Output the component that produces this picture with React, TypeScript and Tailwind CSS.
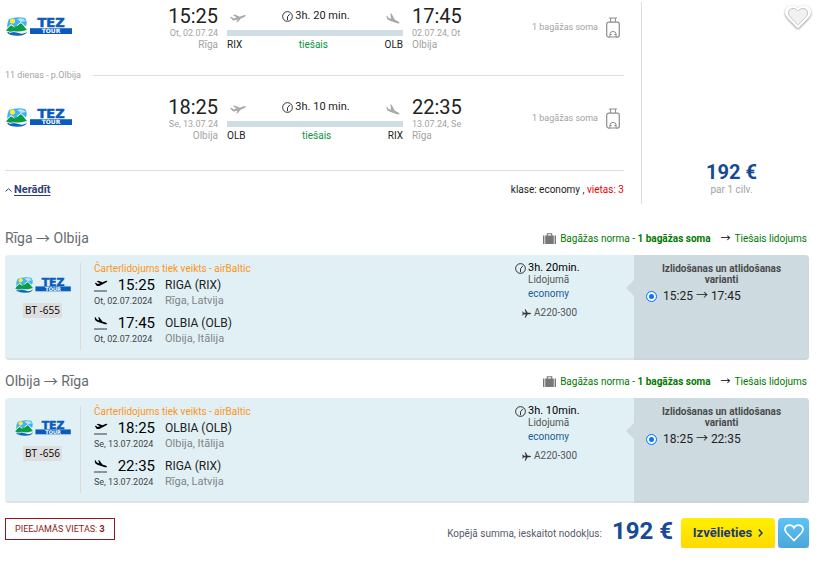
import React from "react";

type Leg = {
  from: string;
  to: string;
  fromCode: string;
  toCode: string;
  fromTitle: string;
  toTitle: string;
  fromPlace: string;
  toPlace: string;
  depart: string;
  arrive: string;
  departDate: string;
  arriveDate: string;
  longDate: string;
  duration: string;
  shortDuration: string;
  flight: string;
};

const legs: Leg[] = [
  {
    from: "Rīga",
    to: "Olbija",
    fromCode: "RIX",
    toCode: "OLB",
    fromTitle: "RIGA (RIX)",
    toTitle: "OLBIA (OLB)",
    fromPlace: "Rīga, Latvija",
    toPlace: "Olbija, Itālija",
    depart: "15:25",
    arrive: "17:45",
    departDate: "Ot, 02.07.24",
    arriveDate: "02.07.24, Ot",
    longDate: "Ot, 02.07.2024",
    duration: "3h. 20 min.",
    shortDuration: "3h. 20min.",
    flight: "BT -655",
  },
  {
    from: "Olbija",
    to: "Rīga",
    fromCode: "OLB",
    toCode: "RIX",
    fromTitle: "OLBIA (OLB)",
    toTitle: "RIGA (RIX)",
    fromPlace: "Olbija, Itālija",
    toPlace: "Rīga, Latvija",
    depart: "18:25",
    arrive: "22:35",
    departDate: "Se, 13.07.24",
    arriveDate: "13.07.24, Se",
    longDate: "Se, 13.07.2024",
    duration: "3h. 10 min.",
    shortDuration: "3h. 10min.",
    flight: "BT -656",
  },
];

function TezLogo({ className }: { className: string }) {
  return (
    <svg viewBox="0 0 66 19" className={`shrink-0 ${className}`} role="img" aria-label="TEZ TOUR">
      <path d="M3 2 Q11 -1 19 1 Q22 5 20 9 L2 12 Q0 8 3 2Z" fill="#3fb4ee" />
      <path d="M11 2 Q17 0 20 4 L15 5Z" fill="#b9e4fa" />
      <circle cx="6.5" cy="4" r="2.6" fill="#ffe83b" />
      <path d="M0 14 Q3 8 7 9 Q9 9 10 10 Q14 5 16 7 L21 13 Q12 16 0 14Z" fill="#0c9d43" />
      <path d="M1.5 11 L5 7.6 L8.5 10 M11 8.5 L15 5.4 L19 9.5" stroke="#fff" strokeWidth="1" fill="none" />
      <path d="M1 15.5 Q7 13 12 15.5 T21 14.5 Q20 18.6 12 18.8 Q4 19 1 15.5Z" fill="#1068ba" />
      <path d="M3 15.6 Q8 13.6 12 15.4 T20 15" stroke="#fff" strokeWidth=".8" fill="none" />
      <rect x="24" y="11.2" width="42" height="5.8" fill="#0a5bbd" />
      <g fontFamily="DejaVu Sans, sans-serif" fontWeight="700" textAnchor="middle">
        <text x="45" y="10.2" fontSize="13" fill="#0a5bbd" stroke="#0a5bbd" strokeWidth=".6">TEZ</text>
        <text x="45" y="16.3" fontSize="6" fill="#fff">TOUR</text>
      </g>
    </svg>
  );
}

function Arrow() {
  return <span className="font-['Noto_Sans_CJK_JP',sans-serif] leading-none">→</span>;
}

function Clock() {
  return (
    <svg viewBox="0 0 12 12" className="size-[11px] shrink-0" fill="none" stroke="#222">
      <circle cx="6" cy="6" r="5.3" strokeWidth="1" />
      <path d="M6 10V6.2L8.6 3.2" strokeWidth="1" />
    </svg>
  );
}

function PlaneUp({ className }: { className: string }) {
  return (
    <svg viewBox="0 0 16 9" className={className} fill="currentColor">
      <path d="M0 3 L1.4 2.7 L3.8 4.4 L6.6 3.6 L2.9 1 L4.8 .6 L9.7 2.8 L13 1.5 Q15.5 .7 15.9 1.5 Q15.6 2.7 13.5 3.5 L10.9 4.5 L7.6 8.2 L6.2 8.6 L7.7 5.6 L4.2 6.4 L2.8 6.3Z" />
    </svg>
  );
}

function PlaneDown({ className }: { className: string }) {
  return (
    <svg viewBox="0 0 14 11" className={className} fill="currentColor">
      <path d="M.2 2.8 L1.3 3 L2.6 4.9 L5 5.8 L4.4 .3 L5.7 .8 L8.6 6.6 L11.8 8.2 Q13.8 9.4 13.4 10.2 Q12.3 10.7 10.2 9.9 L3.4 7.6 L1.2 6.3Z" />
    </svg>
  );
}

function Takeoff() {
  return (
    <svg viewBox="0 0 14 13" className="h-[13px] w-[14px]" fill="#000">
      <path d="M.8 3.9 L2 3.7 L3.5 5 L6.1 4.2 L2.6 2.4 L4.2 1.8 L8.6 3.3 L11.4 2.1 Q13 1.4 13.4 1.9 Q13.2 3 11.5 3.8 L5.3 6.9 L2.8 7.1Z" />
      <path d="M0 12h13" stroke="#666c70" strokeWidth="1.4" />
    </svg>
  );
}

function Landing() {
  return (
    <svg viewBox="0 0 14 14" className="h-[14px] w-[14px]" fill="#000">
      <path d="M.7 1 L1.8 1.5 L2.6 3.3 L5.2 4.4 L4.2 .9 L5.5 1.4 L8.4 5.4 L11.5 6.5 Q13.4 7.3 13 8 Q12.2 8.7 10.3 8 L3.3 5.8 L1 4.1Z" />
      <path d="M0 13h13" stroke="#666c70" strokeWidth="1.4" />
    </svg>
  );
}

function Luggage() {
  return (
    <svg viewBox="0 0 14 22" className="h-[22px] w-[14px] shrink-0" fill="none" stroke="#8c8c8c">
      <path d="M3 1h8M4.6 1v4M9.4 1v4M3 21v-1M11 21v-1" />
      <rect x=".7" y="5.2" width="12.6" height="14.8" rx="2" strokeWidth="1.2" />
      <path d="M4 20v-3.2q0-2.3 3-2.3t3 2.3V20M3.8 17.5h1.8M8.4 17.5h1.8" />
    </svg>
  );
}

function Suitcase() {
  return (
    <svg viewBox="0 0 13 11" className="h-[11px] w-[13px]" fill="#777">
      <path d="M0 2.5h1.4V11H0zM11.6 2.5H13V11h-1.4zM2.2 2.5h8.6V11H2.2z" />
      <path d="M4.3 3V.7h4.4V3" fill="none" stroke="#777" strokeWidth="1.1" />
    </svg>
  );
}

const heart = "M12 21 L3.2 12 C-.8 7.6 1.8 2.5 6.6 2.5 C9 2.5 11 3.8 12 5.8 C13 3.8 15 2.5 17.4 2.5 C22.2 2.5 24.8 7.6 20.8 12 Z";

function Summary({ leg }: { leg: Leg }) {
  return (
    <div className="flex items-start">
      <TezLogo className="mt-[15px] ml-px h-[19px] w-[66px]" />
      <div className="ml-auto w-20 text-right leading-3 text-[#a3a3a3]">
        <div className="h-[25px] text-xl leading-7 text-[#222]">{leg.depart}</div>
        <div className="text-[9px]">{leg.departDate}</div>
        <div>{leg.from}</div>
      </div>
      <div className="mx-[9px] w-[176px] leading-3 text-[#222]">
        <div className="flex h-7 items-center justify-between px-[3px]">
          <PlaneUp className="mt-1 h-[9px] w-4 text-[#a9a9a9]" />
          <div className="flex items-center text-[11px]">
            <Clock />
            <span className="ml-0.5">{leg.duration}</span>
          </div>
          <PlaneDown className="mt-1 h-[11px] w-[14px] text-[#a9a9a9]" />
        </div>
        <div className="mb-[3px] h-1.5 bg-[#cfdee5]" />
        <div className="flex justify-between">
          <span>{leg.fromCode}</span>
          <span className="text-[#0a9444]">tiešais</span>
          <span>{leg.toCode}</span>
        </div>
      </div>
      <div className="w-20 leading-3 text-[#a3a3a3]">
        <div className="h-[25px] text-xl leading-7 text-[#222]">{leg.arrive}</div>
        <div className="text-[9px]">{leg.arriveDate}</div>
        <div>{leg.to}</div>
      </div>
      <div className="mt-[15px] mr-1 ml-9 flex w-[92px] shrink-0 items-center justify-end gap-2 text-[9px] whitespace-nowrap text-[#a3a3a3]">
        1 bagāžas soma
        <Luggage />
      </div>
    </div>
  );
}

function Stop({ icon, time, date, title, place }: { icon: React.ReactNode; time: string; date: string; title: string; place: string }) {
  return (
    <div className="grid grid-cols-[61px_auto] gap-x-2.5 whitespace-nowrap">
      <div className="flex h-[18px] items-center justify-between">
        {icon}
        <span className="text-[15px] leading-[18px] text-black">{time}</span>
      </div>
      <div className="text-xs leading-[18px] text-[#222]">{title}</div>
      <div className="text-[9px] leading-[14px] text-[#444]">{date}</div>
      <div className="text-[11px] leading-[14px] text-[#808488]">{place}</div>
    </div>
  );
}

function Details({ leg }: { leg: Leg }) {
  return (
    <section className="mb-2">
      <div className="flex h-[26px] items-center justify-between">
        <h2 className="text-sm leading-5 text-[#666b70]">
          {leg.from} <Arrow /> {leg.to}
        </h2>
        <div className="mr-0.5 flex items-center text-[#007a00]">
          <Suitcase />
          <span className="ml-1">
            Bagāžas norma - <b className="font-bold">1 bagāžas soma</b>
          </span>
          <span className="mr-1 ml-2.5 text-black">
            <Arrow />
          </span>
          <span>Tiešais lidojums</span>
        </div>
      </div>
      <div className="mt-1 flex h-[105px] rounded border-b-2 border-[#dce3e6] bg-[#e1f0f5]">
        <div className="my-2 flex w-[76px] shrink-0 flex-col items-center border-r border-[#d9dcdd]">
          <TezLogo className="mt-3.5 h-4 w-[58px]" />
          <div className="mt-2.5 bg-[#dedede] px-0.5 font-['Open_Sans'] leading-[15px] text-black">{leg.flight}</div>
        </div>
        <div className="ml-[13px] pt-2">
          <div className="leading-3 text-[#ff9416]">Čarterlidojums tiek veikts - airBaltic</div>
          <div className="flex flex-col gap-1.5 pt-px">
            <Stop icon={<Takeoff />} time={leg.depart} date={leg.longDate} title={leg.fromTitle} place={leg.fromPlace} />
            <Stop icon={<Landing />} time={leg.arrive} date={leg.longDate} title={leg.toTitle} place={leg.toPlace} />
          </div>
        </div>
        <div className="ml-auto w-[119px] pt-[7px] leading-3 text-[#555]">
          <div className="flex items-center text-[11px] text-black">
            <Clock />
            <span className="ml-0.5">{leg.shortDuration}</span>
          </div>
          <div className="ml-[13px]">Lidojumā</div>
          <div className="mt-0.5 ml-[13px] text-[#1a5c96]">economy</div>
          <div className="mt-[7px] ml-[7px] flex items-center gap-[3px]">
            <svg viewBox="0 0 10 10" className="size-[9px]" fill="#333">
              <path d="M10 5q0-.8-1.5-.8H6.3L3.9.2H3l1.2 4H2L1 2.8H.3L.8 5 .3 7.2H1l1-1.4h2.2L3 9.8h.9l2.4-4h2.2Q10 5.8 10 5Z" />
            </svg>
            A220-300
          </div>
        </div>
        <div className="relative -mb-0.5 w-[175px] shrink-0 rounded-r border-b-2 border-[#c9d5da] bg-[#cddae0] pt-2">
          <svg viewBox="0 0 8 16" className="absolute top-[25px] -left-2 h-4 w-2" fill="#cddae0">
            <path d="M8 0v16L0 8Z" />
          </svg>
          <div className="px-6 text-center leading-[11px] font-bold text-[#4a4a4a]">Izlidošanas un atlidošanas varianti</div>
          <label className="mt-1 ml-[13px] flex items-center gap-[7px] text-xs leading-[15px] text-[#222]">
            <input type="radio" name={leg.flight} defaultChecked className="size-[9px] appearance-none rounded-full border-2 border-white bg-[#0075ff] outline-1 outline-[#0075ff]" />
            <span>
              {leg.depart} <Arrow /> {leg.arrive}
            </span>
          </label>
        </div>
      </div>
    </section>
  );
}

export default function App() {
  return (
    <main className="bg-white pl-[5px] font-[Roboto,'Liberation_Sans',sans-serif] text-[10px]">
      <section className="flex pt-0.5">
        <div className="mr-[17px] flex-1">
          <Summary leg={legs[0]} />
          <div className="mt-[18px] mb-3 flex items-center gap-3 text-[9px] leading-3 text-[#a3a3a3]">
            11 dienas - p.Olbija
            <div className="h-px flex-1 bg-[#dedede]" />
          </div>
          <Summary leg={legs[1]} />
          <div className="mt-7 flex items-center justify-between border-t border-[#dedede] pt-[11px]">
            <a href="#" className="flex items-center gap-0.5 text-[11px] leading-3 font-bold text-[#2e3f80]">
              <svg viewBox="0 0 7 4" className="h-1 w-[7px]" fill="none" stroke="currentColor">
                <path d="M.5 3.5 3.5 .7l3 2.8" />
              </svg>
              <span className="underline underline-offset-2">Nerādīt</span>
            </a>
            <div className="text-[#222]">
              klase: economy , <span className="text-[#e80000]">vietas: 3</span>
            </div>
          </div>
        </div>
        <div className="relative flex w-[180px] shrink-0 flex-col items-center border-l border-[#dedede] pt-[158px] pb-2">
          <button type="button" aria-label="Pievienot izlasei" className="absolute top-0.5 right-2.5">
            <svg viewBox="0 0 24 24" className="size-[26px] drop-shadow-[0_1px_1px_rgba(0,0,0,0.45)]" fill="#f1f1f1" stroke="#fff" strokeWidth="2.4">
              <path d={heart} />
              <path d={heart} stroke="#aaa" strokeWidth=".7" fill="none" transform="translate(2.2 2.1) scale(.82)" />
            </svg>
          </button>
          <div className="text-xl leading-6 font-bold text-[#174a94]">192 €</div>
          <div className="leading-3 text-[#a3a3a3]">par 1 cilv.</div>
        </div>
      </section>

      <div className="mt-[21px] mr-3">
        {legs.map((leg) => (
          <Details key={leg.flight} leg={leg} />
        ))}
        <div className="mt-[15px] flex h-[30px] items-center">
          <div className="mb-2 border border-[#96161c] px-[9px] text-[9px] leading-5 whitespace-nowrap text-[#8c1a20]">
            PIEEJAMĀS VIETAS: <b>3</b>
          </div>
          <span className="mr-2.5 ml-auto text-[#555b6a]">Kopējā summa, ieskaitot nodokļus:</span>
          <span className="mb-1 text-2xl leading-7 font-bold text-[#174a94]">192 €</span>
          <button type="button" className="ml-2 flex h-[30px] w-[94px] items-center justify-center gap-1.5 rounded bg-linear-to-b from-[#fff000] to-[#ffd900] text-[13px] font-bold text-[#1d3b6d] shadow-[0_1px_1px_#aaa]">
            Izvēlieties
            <svg viewBox="0 0 5 8" className="h-2 w-[5px]" fill="none" stroke="currentColor" strokeWidth="1.5">
              <path d="M.8.6 4 4 .8 7.4" />
            </svg>
          </button>
          <button type="button" aria-label="Saglabāt" className="ml-[3px] flex h-[30px] w-[31px] items-center justify-center rounded bg-linear-to-b from-[#5fc3f7] to-[#4ba6d8] shadow-[0_1px_1px_#aaa]">
            <svg viewBox="0 0 24 24" className="size-5" fill="none" stroke="#fff" strokeWidth="2">
              <path d={heart} />
            </svg>
          </button>
        </div>
      </div>
    </main>
  );
}
